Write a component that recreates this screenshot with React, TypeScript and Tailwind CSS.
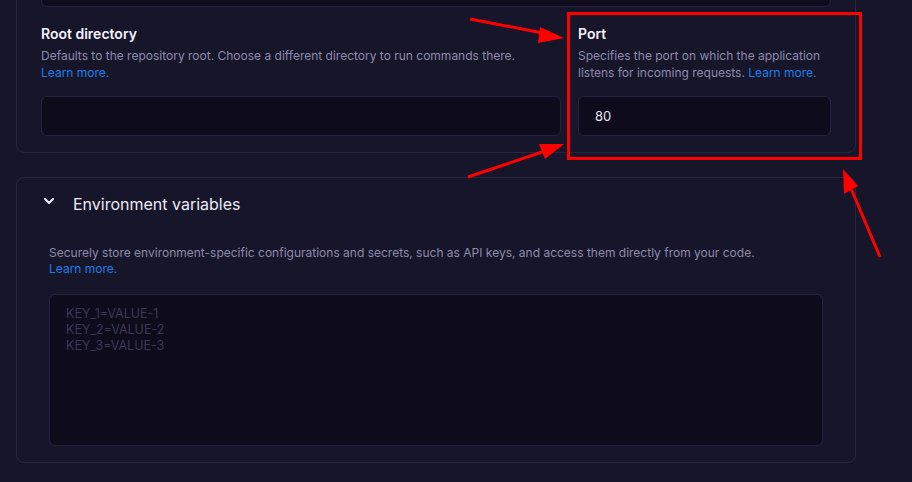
import { ChevronDown } from 'lucide-react'

const font = { fontFamily: 'Inter, "Noto Sans", "Liberation Sans", sans-serif' }

function Field({ title, children, value }: { title: string; children: React.ReactNode; value?: string }) {
  return (
    <div className="flex flex-col">
      <h3 className="text-sm leading-6 font-semibold text-[#f4f3fa]">{title}</h3>
      <p className="mt-px text-xs leading-[17px] text-[#8e8aac]">{children}</p>
      <input
        readOnly
        value={value ?? ''}
        className="mt-[15px] h-10 w-full rounded-md border border-[#272240] bg-[#0e0b1c] px-4 text-[13px] text-[#e6e4f0] outline-none"
      />
    </div>
  )
}

function Annotations() {
  return (
    <svg className="pointer-events-none absolute left-0 top-0" width="912" height="482" viewBox="0 0 912 482">
      <rect x="568.5" y="13.5" width="292" height="145" fill="none" stroke="#ff0000" strokeWidth="3" />
      <line x1="470" y1="19" x2="548" y2="34" stroke="#ff0000" strokeWidth="3" />
      <polygon points="564,38 540,27 538,43" fill="#ff0000" />
      <line x1="468" y1="177" x2="548" y2="150" stroke="#ff0000" strokeWidth="3" />
      <polygon points="564,144 539,144 545,159" fill="#ff0000" />
      <line x1="880" y1="257" x2="850" y2="186" stroke="#ff0000" strokeWidth="3" />
      <polygon points="843,169 844,194 858,186" fill="#ff0000" />
    </svg>
  )
}

export default function App() {
  return (
    <div className="relative h-[482px] w-[912px] overflow-hidden bg-[#17152a]" style={font}>
      <div className="pl-4 pr-14">
        {/* build settings card, scrolled partly out of view */}
        <section className="-mt-[58px] rounded-lg border border-[#29253f] bg-[#17152a] px-6 pt-6 pb-4">
          <div className="h-10 rounded-md border border-[#272240] bg-[#0e0b1c]" />
          <div className="mt-[15px] grid grid-cols-[520px_1fr] gap-x-[17px]">
            <Field title="Root directory">
              Defaults to the repository root. Choose a different directory to run commands there.
              <br />
              <a className="text-[#1b7fe8]">Learn more.</a>
            </Field>
            <Field title="Port" value="80">
              Specifies the port on which the application
              <br />
              listens for incoming requests. <a className="text-[#1b7fe8]">Learn more.</a>
            </Field>
          </div>
        </section>

        <section className="mt-6 rounded-lg border border-[#29253f] bg-[#17152a] pb-4">
          <button className="flex w-full items-center gap-4 px-6 pt-[14px] text-left">
            <ChevronDown className="-mt-[7px] h-4 w-4 text-[#f0eff7]" strokeWidth={3} />
            <span className="text-base leading-6 text-[#eceaf4]">Environment variables</span>
          </button>
          <div className="px-8">
            <p className="mt-[29px] text-xs leading-4 text-[#8e8aac]">
              Securely store environment-specific configurations and secrets, such as API keys, and access them
              directly from your code.
              <br />
              <a className="text-[#1b7fe8]">Learn more.</a>
            </p>
            <textarea
              readOnly
              placeholder={'KEY_1=VALUE-1\nKEY_2=VALUE-2\nKEY_3=VALUE-3'}
              className="mt-[17px] block h-[152px] w-full resize-none rounded-md border border-[#272240] bg-[#0e0b1c] px-4 py-[11px] text-[12.5px] leading-4 text-[#e6e4f0] outline-none placeholder:text-[#3c3954]"
            />
          </div>
        </section>
      </div>
      <Annotations />
    </div>
  )
}
